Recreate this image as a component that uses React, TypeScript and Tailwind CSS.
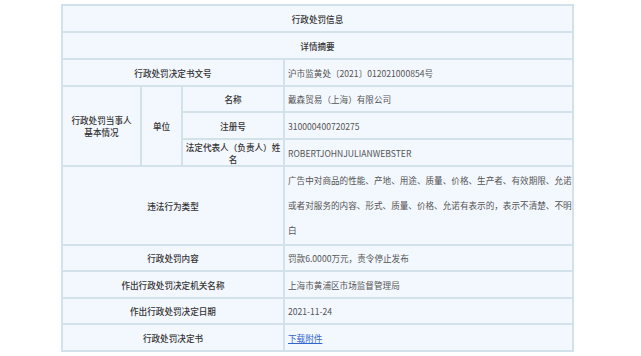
export default function App() {
  const cell = 'border-2 border-[#d3e1eb] bg-[#f3f8fe]';
  const label = `${cell} text-center font-medium text-[#333]`;
  const value = `${cell} pl-[3px] text-[#555] whitespace-nowrap`;

  return (
    <div
      className="min-h-screen bg-white pt-[4px] pl-[61px]"
      style={{ fontFamily: '"Noto Sans CJK SC", "Noto Sans", sans-serif' }}
    >
      <table className="w-[511px] table-fixed border-collapse text-[8.6px] leading-[12px]">
        <colgroup>
          <col className="w-[79px]" />
          <col className="w-[41px]" />
          <col className="w-[102px]" />
          <col className="w-[289px]" />
        </colgroup>
        <tbody>
          <tr className="h-[27px]">
            <td colSpan={4} className={label}>行政处罚信息</td>
          </tr>
          <tr className="h-[27px]">
            <td colSpan={4} className={label}>详情摘要</td>
          </tr>
          <tr className="h-[27px]">
            <td colSpan={3} className={label}>行政处罚决定书文号</td>
            <td className={value}>沪市监黄处〔2021〕012021000854号</td>
          </tr>
          <tr className="h-[26px]">
            <td rowSpan={3} className={label}>
              行政处罚当事人
              <br />
              基本情况
            </td>
            <td rowSpan={3} className={label}>单位</td>
            <td className={label}>名称</td>
            <td className={value}>戴森贸易（上海）有限公司</td>
          </tr>
          <tr className="h-[27px]">
            <td className={label}>注册号</td>
            <td className={value}>310000400720275</td>
          </tr>
          <tr className="h-[27px]">
            <td className={label}>
              法定代表人（负责人）姓
              <br />
              名
            </td>
            <td className={value}>ROBERTJOHNJULIANWEBSTER</td>
          </tr>
          <tr className="h-[79px]">
            <td colSpan={3} className={label}>违法行为类型</td>
            <td className={`${value} leading-[25px]`}>
              广告中对商品的性能、产地、用途、质量、价格、生产者、有效期限、允诺
              <br />
              或者对服务的内容、形式、质量、价格、允诺有表示的，表示不清楚、不明
              <br />白
            </td>
          </tr>
          <tr className="h-[26px]">
            <td colSpan={3} className={label}>行政处罚内容</td>
            <td className={value}>罚款6.0000万元，责令停止发布</td>
          </tr>
          <tr className="h-[27px]">
            <td colSpan={3} className={label}>作出行政处罚决定机关名称</td>
            <td className={value}>上海市黄浦区市场监督管理局</td>
          </tr>
          <tr className="h-[26px]">
            <td colSpan={3} className={label}>作出行政处罚决定日期</td>
            <td className={value}>2021-11-24</td>
          </tr>
          <tr className="h-[27px]">
            <td colSpan={3} className={label}>行政处罚决定书</td>
            <td className={value}>
              <a href="#" className="text-[#3366cc] underline">下载附件</a>
            </td>
          </tr>
        </tbody>
      </table>
    </div>
  );
}
